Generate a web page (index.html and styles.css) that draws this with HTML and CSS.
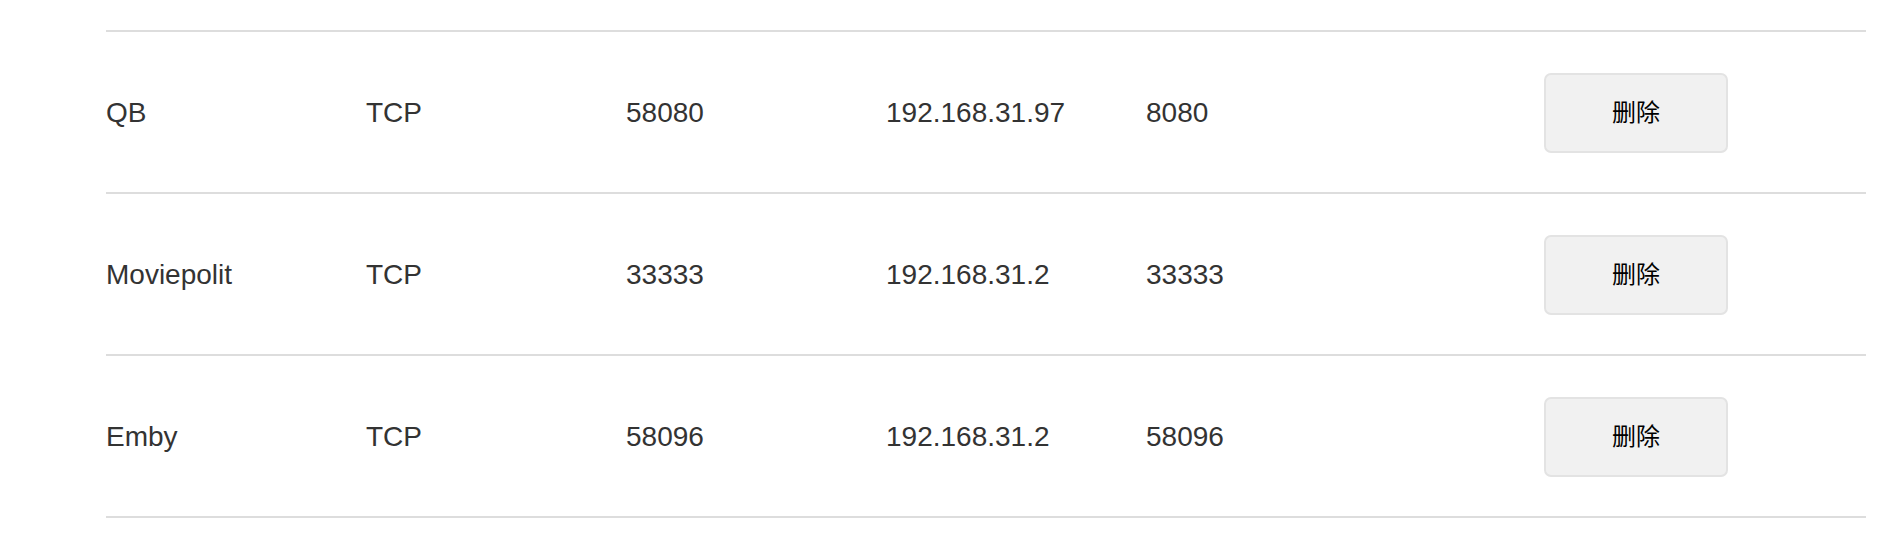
FILE: index.html
```html
<!DOCTYPE html>
<html lang="zh-CN">
<head>
<meta charset="utf-8">
<link rel="stylesheet" href="styles.css">
</head>
<body>
<div class="page">
  <div class="table">
    <div class="row">
      <div class="cell">QB</div>
      <div class="cell">TCP</div>
      <div class="cell">58080</div>
      <div class="cell">192.168.31.97</div>
      <div class="cell">8080</div>
      <div class="cell action"><button class="btn">删除</button></div>
    </div>
    <div class="row">
      <div class="cell">Moviepolit</div>
      <div class="cell">TCP</div>
      <div class="cell">33333</div>
      <div class="cell">192.168.31.2</div>
      <div class="cell">33333</div>
      <div class="cell action"><button class="btn">删除</button></div>
    </div>
    <div class="row">
      <div class="cell">Emby</div>
      <div class="cell">TCP</div>
      <div class="cell">58096</div>
      <div class="cell">192.168.31.2</div>
      <div class="cell">58096</div>
      <div class="cell action"><button class="btn">删除</button></div>
    </div>
  </div>
</div>
</body>
</html>
```

FILE: styles.css
```css
html, body {
  margin: 0;
  padding: 0;
  background: #ffffff;
}

body {
  font-family: "Liberation Sans", Arial, "Noto Sans CJK SC", sans-serif;
  color: #333333;
}

.page {
  padding: 30px 20px 0 106px;
}

.table {
  width: 1760px;
  border-top: 2px solid #dddddd;
}

.row {
  display: grid;
  grid-template-columns: 260px 260px 260px 260px 260px 1fr;
  height: 160px;
  align-items: center;
  border-bottom: 2px solid #dddddd;
}

.cell {
  font-size: 28px;
  line-height: 32px;
  padding-top: 2px;
  white-space: nowrap;
}

.action {
  display: flex;
  justify-content: center;
  padding-top: 0;
}

.btn {
  width: 184px;
  height: 80px;
  margin-top: 2px;
  background: #f1f1f1;
  border: 2px solid #e3e3e3;
  border-radius: 7px;
  font-family: "Noto Sans CJK SC", sans-serif;
  font-size: 24px;
  line-height: 1;
  color: #000000;
  padding: 0 0 4px 0;
  cursor: pointer;
}
```
